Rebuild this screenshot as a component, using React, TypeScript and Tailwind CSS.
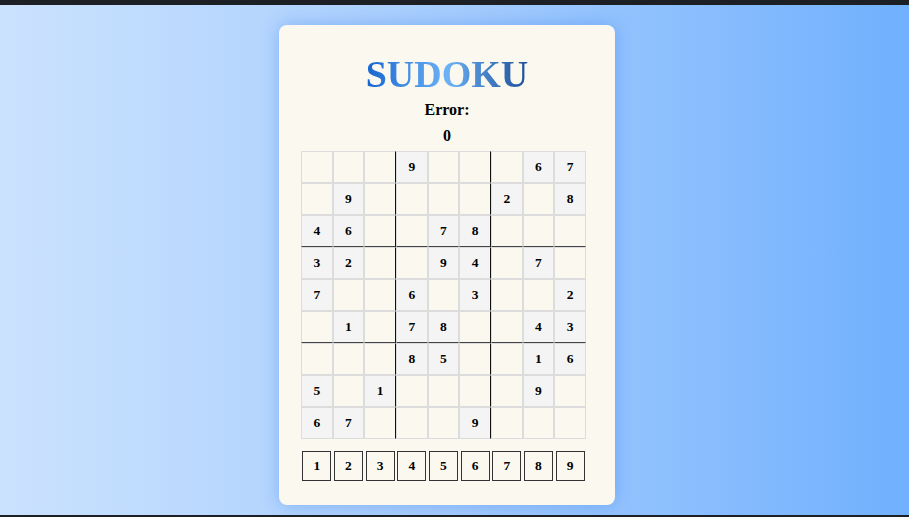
const BOARD = [
  "---9---67",
  "-9----2-8",
  "46--78---",
  "32--94-7-",
  "7--6-3--2",
  "-1-78--43",
  "---85--16",
  "5-1----9-",
  "67---9---",
];

const DIGITS = ["1", "2", "3", "4", "5", "6", "7", "8", "9"];

function Tile({ value, row, col }: { value: string; row: number; col: number }) {
  const filled = value !== "-";
  const right = col === 2 || col === 5;
  const bottom = row === 2 || row === 5;
  return (
    <div
      className={`flex h-[32px] items-center justify-center border border-[#dcdcdc] text-[13.5px] font-bold text-black ${
        filled ? "bg-[#f4f4f4]" : "bg-[#fbf8ef]"
      } ${right ? "border-r-[#111]" : ""} ${bottom ? "border-b-[#444]" : ""}`}
    >
      {filled ? value : ""}
    </div>
  );
}

export default function App() {
  return (
    <div
      className="flex h-[517px] w-full flex-col overflow-hidden"
      style={{ fontFamily: '"Liberation Serif", "Times New Roman", serif' }}
    >
      <div className="h-[5px] bg-[#1c1f24]" />
      <main className="flex flex-1 justify-center bg-gradient-to-r from-[#cbe2fe] via-[#a6cdfd] to-[#70b0fe] pr-[15px] pt-[20px]">
        <div className="flex h-[480px] w-[336px] flex-col items-center rounded-[8px] bg-[#fbf8ef] pt-[26px] shadow-[0_0_18px_rgba(40,110,230,0.35)]">
          <h1 className="bg-gradient-to-r from-[#1565cf] via-[#6cb2f6] to-[#1d4f98] bg-clip-text text-[38px] font-bold leading-[46px] text-transparent">
            SUDOKU
          </h1>
          <p className="text-[16px] font-bold leading-[26px] text-black">Error:</p>
          <p className="text-[16px] font-bold leading-[26px] text-black">0</p>

          <div className="mt-[2px] grid w-[285px] grid-cols-9 self-start ml-[22px]">
            {BOARD.map((line, r) =>
              line.split("").map((v, c) => <Tile key={`${r}-${c}`} value={v} row={r} col={c} />)
            )}
          </div>

          <div className="mt-[12px] grid w-[285px] grid-cols-9 self-start ml-[22px]">
            {DIGITS.map((d) => (
              <div key={d} className="flex justify-center">
                <div className="flex h-[30px] w-[29px] items-center justify-center border border-[#333] text-[13.5px] font-bold text-black">
                  {d}
                </div>
              </div>
            ))}
          </div>
        </div>
      </main>
      <div className="h-[2px] bg-[#1c1f24]" />
    </div>
  );
}
